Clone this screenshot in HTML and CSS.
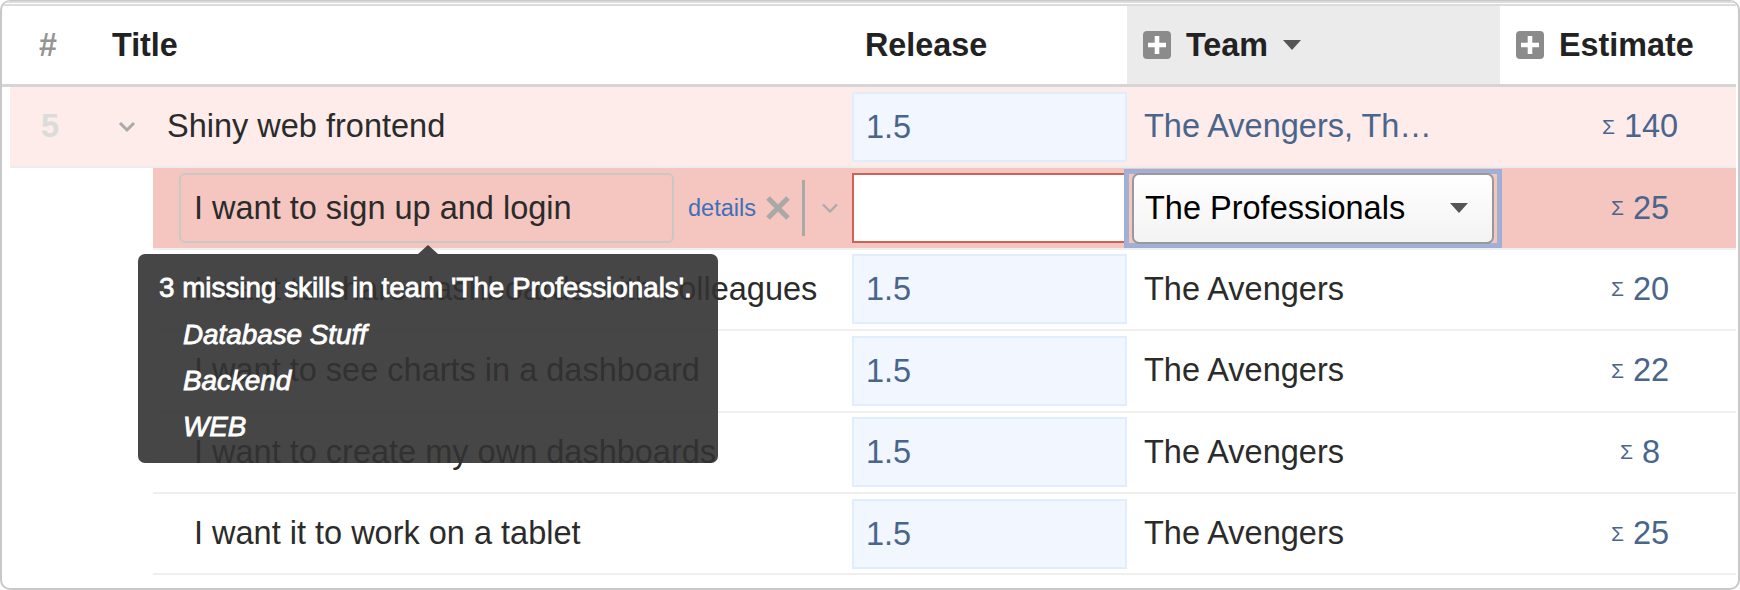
FILE: index.html
```
<!DOCTYPE html>
<html lang="en">
<head>
  <meta charset="utf-8">
  <title>Backlog</title>
  <link rel="stylesheet" href="styles.css">
</head>
<body>
  <div class="backlog">
    <div class="head">
      <div class="col-num">#</div>
      <div class="col-title">Title</div>
      <div class="col-release">Release</div>
      <div class="col-team sorted">
        <svg class="plus" viewBox="0 0 28 28"><rect width="28" height="28" rx="4" fill="#8b8b8b"/><path d="M14 5v18M5 14h18" stroke="#fff" stroke-width="4.6"/></svg>
        <span>Team</span>
        <svg class="arrow" viewBox="0 0 18 10"><path d="M0 0h18l-9 10z" fill="#555"/></svg>
      </div>
      <div class="col-estimate">
        <svg class="plus" viewBox="0 0 28 28"><rect width="28" height="28" rx="4" fill="#8b8b8b"/><path d="M14 5v18M5 14h18" stroke="#fff" stroke-width="4.6"/></svg>
        <span>Estimate</span>
      </div>
    </div>

    <div class="row parent">
      <div class="number">5</div>
      <div class="title">
        <svg class="chevron" viewBox="0 0 18 12"><path d="M2 2l7 7 7-7" fill="none" stroke="#a9a9a9" stroke-width="3"/></svg>
        <span>Shiny web frontend</span>
      </div>
      <div class="release"><div class="box">1.5</div></div>
      <div class="team">The Avengers, Th…</div>
      <div class="estimate"><small>Σ</small>140</div>
    </div>

    <div class="row child active">
      <div class="title">
        <div class="title-input">I want to sign up and login</div>
        <a class="details">details</a>
        <svg class="close" viewBox="0 0 24 24"><path d="M2 2l20 20M22 2L2 22" stroke="#a8a8a6" stroke-width="5.2"/></svg>
        <span class="divider"></span>
        <svg class="chevron-small" viewBox="0 0 16 10"><path d="M1 1.5l7 7 7-7" fill="none" stroke="#a9a9a9" stroke-width="2.2"/></svg>
      </div>
      <div class="release"><div class="box missing"></div></div>
      <div class="team">
        <div class="focus">
          <div class="select">
            <span>The Professionals</span>
            <svg class="arrow" viewBox="0 0 18 10"><path d="M0 0h18l-9 10z" fill="#555"/></svg>
          </div>
        </div>
      </div>
      <div class="estimate"><small>Σ</small>25</div>

      <div class="tooltip">
        <p>3 missing skills in team 'The Professionals'.</p>
        <ul>
          <li>Database Stuff</li>
          <li>Backend</li>
          <li>WEB</li>
        </ul>
      </div>
    </div>

    <div class="row child">
      <div class="title">I want to share dashboards with colleagues</div>
      <div class="release"><div class="box">1.5</div></div>
      <div class="team">The Avengers</div>
      <div class="estimate"><small>Σ</small>20</div>
    </div>
    <div class="row child">
      <div class="title">I want to see charts in a dashboard</div>
      <div class="release"><div class="box">1.5</div></div>
      <div class="team">The Avengers</div>
      <div class="estimate"><small>Σ</small>22</div>
    </div>
    <div class="row child">
      <div class="title">I want to create my own dashboards</div>
      <div class="release"><div class="box">1.5</div></div>
      <div class="team">The Avengers</div>
      <div class="estimate"><small>Σ</small>8</div>
    </div>
    <div class="row child">
      <div class="title">I want it to work on a tablet</div>
      <div class="release"><div class="box">1.5</div></div>
      <div class="team">The Avengers</div>
      <div class="estimate"><small>Σ</small>25</div>
    </div>
  </div>
</body>
</html>
```
FILE: styles.css
```
* {
  box-sizing: border-box;
}

body {
  margin: 0;
  background: #fff;
  font-family: "Liberation Sans", Arial, sans-serif;
  font-size: 32.5px;
  color: #2b2b2b;
}

svg {
  display: block;
  flex: none;
}

.backlog {
  width: 1740px;
  height: 590px;
  border: 2px solid #c8c8c8;
  border-top-width: 1px;
  border-radius: 10px;
  padding-right: 2px;
  overflow: hidden;
}

/* header */
.head {
  display: grid;
  grid-template-columns: 110px 753px 262px 373px 1fr;
  height: 86px;
  border-top: 5px solid #dcdcdc;
  border-top-style: double;
  border-bottom: 3px solid #d5d5d5;
  font-size: 32.3px;
  font-weight: bold;
  color: #222;
}

.head > div {
  display: flex;
  align-items: center;
}

.head .col-num {
  padding-left: 37px;
  color: #949494;
}

.sorted {
  background: #ebebeb;
}

.col-team,
.col-estimate {
  gap: 15px;
  padding-left: 16px;
}

.plus {
  width: 28px;
  height: 28px;
}

.arrow {
  width: 18px;
  height: 10px;
}

/* rows */
.row {
  display: grid;
  grid-template-columns: 699px 277px 371px 1fr;
  height: 81.4px;
  margin-left: 151px;
  border-bottom: 2px solid #efefef;
  position: relative;
}

.row.parent {
  grid-template-columns: 98px 744px 277px 371px 1fr;
  margin-left: 8px;
  background: #fdecea;
  border-bottom-color: #ececec;
}

.row > div {
  display: flex;
  align-items: center;
  white-space: nowrap;
}

.row.active {
  background: #f5c6bf;
}

.number {
  padding-left: 31px;
  font-weight: bold;
  color: #dadcda;
}

.parent .title {
  gap: 31px;
  padding-left: 10px;
}

.child .title {
  padding-left: 41px;
}

.child.active .title {
  padding-left: 26px;
}

.chevron {
  width: 18px;
  height: 12px;
}

.title-input {
  width: 495px;
  height: 70px;
  padding-left: 13px;
  border: 2px solid #cbc7c5;
  border-radius: 6px;
  line-height: 66px;
}

.details {
  margin-left: 14px;
  font-size: 23.5px;
  color: #3f6fba;
}

.close {
  width: 24px;
  height: 24px;
  margin-left: 10px;
}

.divider {
  width: 3px;
  height: 56px;
  margin-left: 12px;
  background: #a9a9a7;
}

.chevron-small {
  width: 16px;
  height: 10px;
  margin-left: 17px;
}

.box {
  width: 275px;
  height: 70px;
  padding-left: 12px;
  border: 2px solid #e0edfd;
  background: #f2f6fe;
  line-height: 66px;
  color: #4a658c;
}

.box.missing {
  border-color: #d06255;
  background: #fff;
}

.row .team {
  padding-left: 15px;
}

.parent .team,
.estimate {
  color: #4a658c;
}

.row.active .team {
  padding-left: 0;
}

.focus {
  flex: none;
  width: 378px;
  height: 79px;
  margin-left: -5px;
  padding: 2px 6px;
  border: 2px solid #9dafd8;
  box-shadow: inset 0 0 0 3px #a3b0d4;
}

.select {
  display: flex;
  align-items: center;
  justify-content: space-between;
  height: 71px;
  padding: 0 24px 0 11px;
  border: 2px solid #999;
  border-radius: 7px;
  background: linear-gradient(#fff, #f3f3f3);
  color: #000;
}

.estimate {
  justify-content: center;
  padding-left: 44px;
}

.estimate small {
  margin-right: 9px;
  font-size: 21px;
}

/* skills tooltip */
.row > .tooltip {
  display: block;
  position: absolute;
  z-index: 2;
  top: 86px;
  left: -15px;
  width: 580px;
  height: 209px;
  padding: 11px 21px;
  border-radius: 7px;
  background: rgba(50, 50, 50, 0.9);
  color: #fff;
  font-size: 27.8px;
  line-height: 46.3px;
  -webkit-text-stroke: 0.8px #fff;
}

.tooltip::before {
  content: "";
  position: absolute;
  top: -9px;
  left: 280px;
  border: 10px solid transparent;
  border-top: 0;
  border-bottom: 9px solid rgba(50, 50, 50, 0.9);
}

.tooltip p {
  margin: 0;
}

.tooltip ul {
  margin: 0;
  padding-left: 24px;
  list-style: none;
  font-style: italic;
}
```
